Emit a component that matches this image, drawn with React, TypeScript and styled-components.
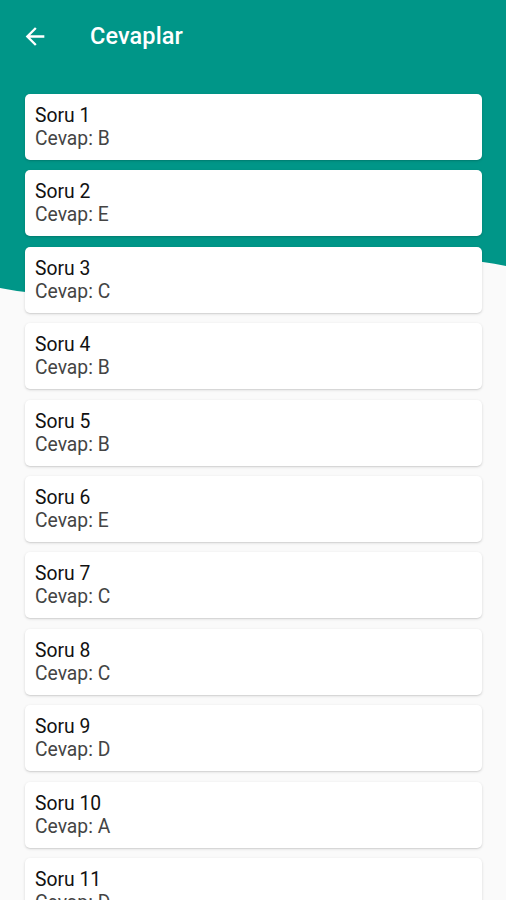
import styled, { createGlobalStyle } from "styled-components";

const GlobalStyle = createGlobalStyle`
    html, body {
        margin: 0;
        padding: 0;
        background: #fafafa;
        font-family: Roboto, "Noto Sans", "Liberation Sans", sans-serif;
    }
`;

const Page = styled.div`
    position: relative;
    height: 900px;
    overflow: hidden;
`;

const Backdrop = styled.svg`
    position: absolute;
    top: 0;
    left: 0;
    width: 506px;
    height: 300px;
    z-index: 0;
`;

const Toolbar = styled.header`
    position: relative;
    z-index: 1;
    display: flex;
    align-items: center;
    height: 72px;
    padding: 0 0 0 21px;
    color: #fff;
`;

const BackButton = styled.button`
    display: flex;
    align-items: center;
    justify-content: center;
    width: 28px;
    height: 28px;
    padding: 0;
    border: none;
    background: transparent;
    color: #fff;
    cursor: pointer;
`;

const Title = styled.h1`
    margin: 0 0 0 41px;
    font-size: 23.5px;
    font-weight: 500;
    letter-spacing: 0.1px;
`;

const List = styled.div`
    position: relative;
    z-index: 1;
    display: flex;
    flex-direction: column;
    gap: 10.4px;
    padding: 22px 24px 20px 25px;
`;

const Card = styled.div`
    background: #fff;
    border-radius: 5px;
    padding: 10px 10px;
    box-shadow: 0 1px 3px rgba(0, 0, 0, 0.14), 0 1px 1px rgba(0, 0, 0, 0.06);
`;

const Line = styled.div<{ $muted?: boolean }>`
    font-size: 19.3px;
    line-height: 23px;
    color: ${p => (p.$muted ? "#444" : "#111")};
`;

const answers = ["B", "E", "C", "B", "B", "E", "C", "C", "D", "A", "D"];

const App = () => {
    return (
        <>
            <GlobalStyle />
            <Page>
                <Backdrop viewBox="0 0 506 300" preserveAspectRatio="none">
                    <path d="M0,0 H506 V266 C330,230 150,318 0,288 Z" fill="#009688" />
                </Backdrop>
                <Toolbar>
                    <BackButton aria-label="Geri">
                        <svg width="29" height="29" viewBox="0 0 24 24" fill="#fff">
                            <path d="M20 11H7.83l5.59-5.59L12 4l-8 8 8 8 1.41-1.41L7.83 13H20v-2z" />
                        </svg>
                    </BackButton>
                    <Title>Cevaplar</Title>
                </Toolbar>
                <List>
                    {answers.map((a, i) => (
                        <Card key={i}>
                            <Line>Soru {i + 1}</Line>
                            <Line $muted>Cevap: {a}</Line>
                        </Card>
                    ))}
                </List>
            </Page>
        </>
    );
};

export default App;
